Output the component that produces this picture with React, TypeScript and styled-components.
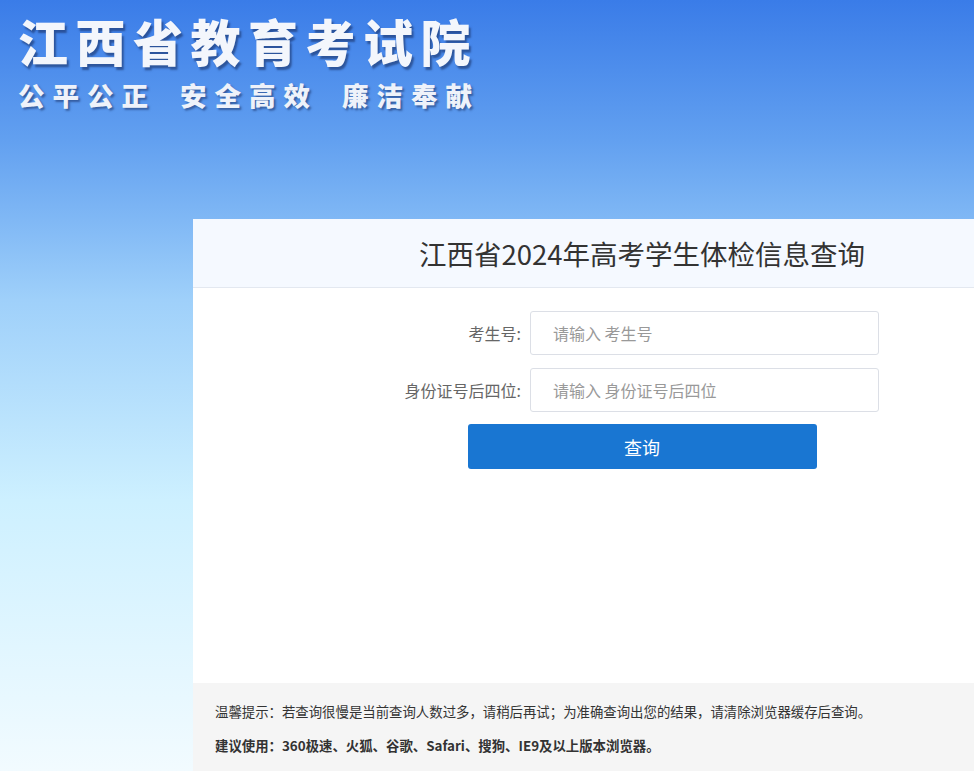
import React from 'react';
import styled, { createGlobalStyle } from 'styled-components';

const GlobalStyle = createGlobalStyle`
    html, body {
        margin: 0;
        padding: 0;
        overflow: hidden;
    }
    body {
        font-family: "Microsoft YaHei", "Noto Sans CJK SC", "Noto Sans", sans-serif;
        color: #333;
    }
`;

const Page = styled.div`
    min-height: 771px;
    overflow: hidden;
    background: linear-gradient(
        to bottom,
        #3a7ce8 0px,
        #62a0f0 140px,
        #80b8f5 220px,
        #9fd0fa 300px,
        #cdf0ff 500px,
        #f2fbff 771px
    );
`;

const Banner = styled.div`
    height: 219px;
    box-sizing: border-box;
    padding: 12px 0 0 18px;
`;

const SiteTitle = styled.h1`
    margin: 0;
    font-size: 50px;
    line-height: 56px;
    font-weight: 900;
    letter-spacing: 7.5px;
    color: #f3f6fc;
    text-shadow: 2px 3px 2px rgba(20, 40, 90, 0.55);
`;

const Slogan = styled.div`
    display: flex;
    gap: 24px;
    margin-top: 12px;
    font-size: 26.5px;
    line-height: 30px;
    font-weight: 900;
    letter-spacing: 8px;
    color: #eef2fa;
    text-shadow: 2px 2px 2px rgba(20, 40, 90, 0.5);
`;

const Panel = styled.div`
    margin-left: 193px;
    width: 898px;
    background: #fff;
`;

const PanelHeader = styled.div`
    height: 69px;
    box-sizing: border-box;
    background: #f5f9ff;
    border-bottom: 1px solid #e3e8f0;
    display: flex;
    align-items: center;
    justify-content: center;
`;

const PanelTitle = styled.h2`
    margin: 0;
    font-size: 27.5px;
    font-weight: 400;
    color: #333;
`;

const PanelBody = styled.div`
    height: 395px;
    box-sizing: border-box;
    padding-top: 23px;
`;

const Form = styled.form`
    display: flex;
    flex-direction: column;
    gap: 13px;
    margin-left: 198px;
`;

const FieldRow = styled.label`
    display: flex;
    align-items: center;
    gap: 9px;
`;

const FieldLabel = styled.span`
    width: 130px;
    text-align: right;
    font-size: 16px;
    color: #666;
    white-space: nowrap;
`;

const Input = styled.input`
    width: 349px;
    height: 44px;
    box-sizing: border-box;
    border: 1px solid #dcdfe6;
    border-radius: 3px;
    padding: 0 22px;
    font-family: inherit;
    font-size: 16px;
    color: #333;
    outline: none;
    &::placeholder {
        color: #999;
    }
`;

const ButtonRow = styled.div`
    display: flex;
    justify-content: center;
    margin-top: 12px;
`;

const SubmitButton = styled.button`
    width: 349px;
    height: 45px;
    border: none;
    border-radius: 3px;
    background: #1976d2;
    color: #fff;
    font-family: inherit;
    font-size: 18px;
    cursor: pointer;
`;

const Footer = styled.div`
    background: #f5f5f5;
    padding: 18px 22px 20px;
    min-height: 88px;
    box-sizing: border-box;
    font-size: 13.4px;
    color: #333;
    & > p {
        margin: 0;
        line-height: 20px;
    }
    & > p + p {
        margin-top: 14px;
        font-weight: 700;
    }
`;

const fields = [
    { label: '考生号:', placeholder: '请输入 考生号' },
    { label: '身份证号后四位:', placeholder: '请输入 身份证号后四位' },
];

const App = (): JSX.Element => {
    return (
        <Page>
            <GlobalStyle />
            <Banner>
                <SiteTitle>江西省教育考试院</SiteTitle>
                <Slogan>
                    <span>公平公正</span>
                    <span>安全高效</span>
                    <span>廉洁奉献</span>
                </Slogan>
            </Banner>
            <Panel>
                <PanelHeader>
                    <PanelTitle>江西省2024年高考学生体检信息查询</PanelTitle>
                </PanelHeader>
                <PanelBody>
                    <Form onSubmit={(e) => e.preventDefault()}>
                        {fields.map((f) => (
                            <FieldRow key={f.label}>
                                <FieldLabel>{f.label}</FieldLabel>
                                <Input placeholder={f.placeholder} />
                            </FieldRow>
                        ))}
                    </Form>
                    <ButtonRow>
                        <SubmitButton type="button">查询</SubmitButton>
                    </ButtonRow>
                </PanelBody>
                <Footer>
                    <p>温馨提示：若查询很慢是当前查询人数过多，请稍后再试；为准确查询出您的结果，请清除浏览器缓存后查询。</p>
                    <p>建议使用：360极速、火狐、谷歌、Safari、搜狗、IE9及以上版本浏览器。</p>
                </Footer>
            </Panel>
        </Page>
    );
};

export default App;
